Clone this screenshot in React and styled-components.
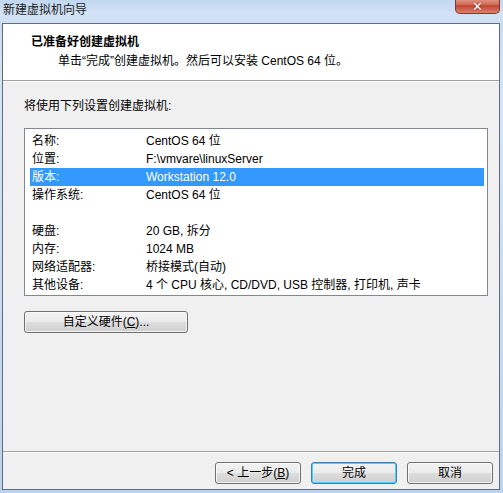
import React from 'react';
import styled, { createGlobalStyle } from 'styled-components';

const GlobalStyle = createGlobalStyle`
  html, body {
    margin: 0;
    padding: 0;
    background: #dbe6f4;
  }
  body {
    font-family: "Liberation Sans", "Noto Sans CJK SC", sans-serif;
    font-size: 12px;
    color: #000;
  }
`;

const Window = styled.div`
  width: 503px;
  height: 493px;
  display: flex;
  flex-direction: column;
  background: linear-gradient(180deg, #c5d9f1 0%, #d6e4f5 20%, #c9dbf0 60%, #bcd3ee 100%);
  overflow: hidden;
`;

const TitleBar = styled.div`
  height: 23px;
  display: flex;
  align-items: flex-start;
  background: linear-gradient(180deg, #c2d7f0 0%, #d3e2f5 60%, #cfdff3 100%);
`;

const TitleText = styled.div`
  padding: 3px 0 0 3px;
  line-height: 14px;
  color: #1a1a1a;
`;

const CloseButton = styled.div`
  margin-left: auto;
  margin-right: 3px;
  margin-top: -3px;
  width: 45px;
  height: 17px;
  box-sizing: border-box;
  border: 1px solid #7a3a32;
  border-top: none;
  border-radius: 0 0 5px 5px;
  background: linear-gradient(180deg, #e8a793 0%, #d46f5d 45%, #c4452f 55%, #d88470 100%);
  display: flex;
  align-items: center;
  justify-content: center;
  color: #fff;
  font-family: "DejaVu Sans", sans-serif;
  font-weight: bold;
  font-size: 13px;
  padding-top: 2px;
  text-shadow: 0 0 2px #6b2016;
`;

const Client = styled.div`
  margin: 0 3px 3px 2px;
  flex: 1;
  display: flex;
  flex-direction: column;
  border: 1px solid #5d6c80;
  background: #f0f0f0;
`;

const Header = styled.div`
  height: 57px;
  background: #fff;
  border-bottom: 1px solid #a0a0a0;
  box-shadow: 0 1px 0 #fff;
  padding: 10px 0 0 28px;
  box-sizing: border-box;
`;

const HeaderTitle = styled.div`
  font-weight: bold;
  line-height: 16px;
`;

const HeaderSub = styled.div`
  padding-left: 27px;
  margin-top: 3px;
  line-height: 16px;
`;

const Body = styled.div`
  flex: 1;
  padding: 16px 0 0 21px;
  margin-top: 1px;
`;

const Intro = styled.div`
  line-height: 16px;
`;

const ListBox = styled.div`
  margin-top: 14px;
  width: 464px;
  height: 168px;
  box-sizing: border-box;
  border: 1px solid #828790;
  background: #fff;
  padding: 3px 3px 0 5px;
`;

const Row = styled.div`
  display: flex;
  height: 18px;
  line-height: 18px;
  background: ${p => (p.$selected ? '#3399ff' : 'transparent')};
  color: ${p => (p.$selected ? '#fff' : '#000')};
`;

const Spacer = styled.div`
  height: 18px;
`;

const Label = styled.div`
  width: 114px;
  padding-left: 2px;
`;

const Value = styled.div``;

const Button = styled.button`
  height: 22px;
  box-sizing: border-box;
  border: 1px solid ${p => (p.$focused ? '#3c7fb1' : '#707070')};
  border-radius: 3px;
  background: linear-gradient(180deg, #f2f2f2 0%, #ebebeb 48%, #dddddd 52%, #cfcfcf 100%);
  box-shadow: inset 0 0 0 1px ${p => (p.$focused ? '#48d0ff' : 'rgba(255,255,255,0.7)')};
  font-family: "Liberation Sans", "Noto Sans CJK SC", sans-serif;
  font-size: 12px;
  color: #000;
  padding: 0;
  line-height: 18px;
`;

const CustomButton = styled(Button)`
  margin-top: 15px;
  width: 164px;
`;

const Footer = styled.div`
  height: 38px;
  border-top: 1px solid #a0a0a0;
  box-shadow: inset 0 1px 0 #fff;
  display: flex;
  justify-content: flex-end;
  align-items: flex-start;
  gap: 10px;
  padding: 10px 6px 0 0;
  box-sizing: border-box;
`;

const FooterButton = styled(Button)`
  width: 86px;
`;

const rows = [
  ['名称:', 'CentOS 64 位'],
  ['位置:', 'F:\\vmvare\\linuxServer'],
  ['版本:', 'Workstation 12.0', true],
  ['操作系统:', 'CentOS 64 位'],
  null,
  ['硬盘:', '20 GB, 拆分'],
  ['内存:', '1024 MB'],
  ['网络适配器:', '桥接模式(自动)'],
  ['其他设备:', '4 个 CPU 核心, CD/DVD, USB 控制器, 打印机, 声卡'],
];

export default function App() {
  return (
    <>
      <GlobalStyle />
      <Window>
        <TitleBar>
          <TitleText>新建虚拟机向导</TitleText>
          <CloseButton>✕</CloseButton>
        </TitleBar>
        <Client>
          <Header>
            <HeaderTitle>已准备好创建虚拟机</HeaderTitle>
            <HeaderSub>单击“完成”创建虚拟机。然后可以安装 CentOS 64 位。</HeaderSub>
          </Header>
          <Body>
            <Intro>将使用下列设置创建虚拟机:</Intro>
            <ListBox>
              {rows.map((r, i) =>
                r ? (
                  <Row key={i} $selected={r[2]}>
                    <Label>{r[0]}</Label>
                    <Value>{r[1]}</Value>
                  </Row>
                ) : (
                  <Spacer key={i} />
                )
              )}
            </ListBox>
            <CustomButton>自定义硬件(<u>C</u>)...</CustomButton>
          </Body>
          <Footer>
            <FooterButton>&lt; 上一步(<u>B</u>)</FooterButton>
            <FooterButton $focused>完成</FooterButton>
            <FooterButton>取消</FooterButton>
          </Footer>
        </Client>
      </Window>
    </>
  );
}
